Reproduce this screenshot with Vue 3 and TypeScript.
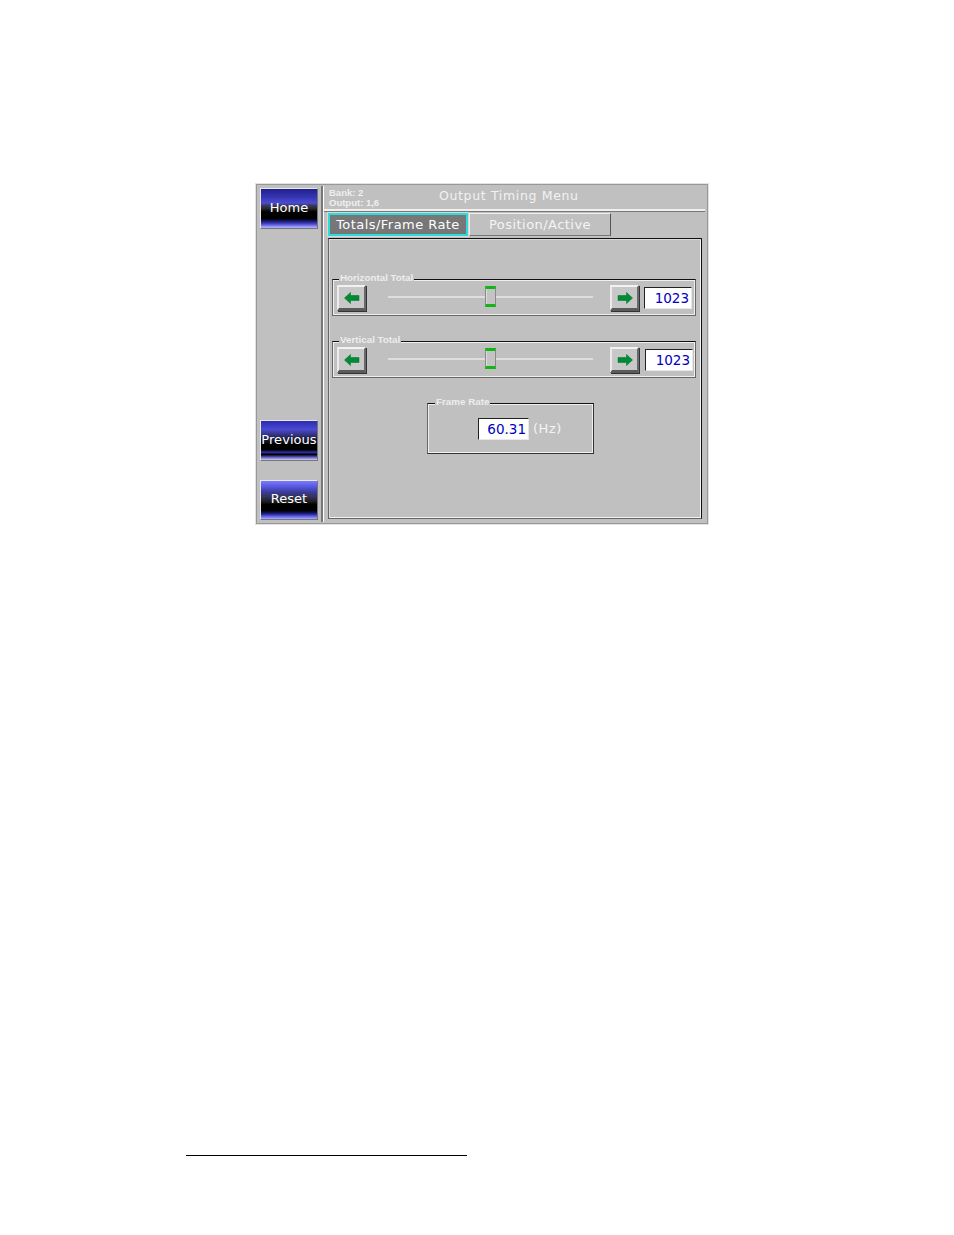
<script setup lang="ts">
interface Slider { label: string; value: string; wide: boolean }
const sliders: Slider[] = [
  { label: 'Horizontal Total', value: '1023', wide: false },
  { label: 'Vertical Total', value: '1023', wide: true },
]
</script>

<template>
  <div class="page">
    <div class="window">
      <aside class="side">
        <button class="nav home">Home</button>
        <div class="spacer"></div>
        <button class="nav previous">Previous</button>
        <button class="nav reset">Reset</button>
      </aside>
      <main class="main">
        <header class="head">
          <div class="status"><div>Bank: 2</div><div>Output: 1,6</div></div>
          <h1 class="title">Output Timing Menu</h1>
        </header>
        <nav class="tabs">
          <div class="tab active"><span>Totals/Frame Rate</span></div>
          <div class="tab"><span>Position/Active</span></div>
        </nav>
        <section class="panel">
          <div v-for="s in sliders" :key="s.label" class="group">
            <span class="legend">{{ s.label }}</span>
            <button class="arrow">
              <svg width="16" height="12" viewBox="0 0 16 12"><path d="M0.5 6 L6.5 0.5 V3.5 H15 V8.5 H6.5 V11.5 Z" fill="#008c34" stroke="#006a2c" stroke-width="0.5" /></svg>
            </button>
            <div class="slider"><div class="thumb"></div></div>
            <button class="arrow">
              <svg width="16" height="12" viewBox="0 0 16 12"><path d="M15.5 6 L9.5 0.5 V3.5 H1 V8.5 H9.5 V11.5 Z" fill="#008c34" stroke="#006a2c" stroke-width="0.5" /></svg>
            </button>
            <div class="value" :class="{ wide: s.wide }">{{ s.value }}</div>
          </div>
          <div class="frame">
            <span class="legend">Frame Rate</span>
            <div class="value rate">60.31</div>
            <span class="unit">(Hz)</span>
          </div>
        </section>
      </main>
    </div>
    <div class="footnote"></div>
  </div>
</template>

<style>
html, body { margin: 0; background: #fff; }
</style>

<style scoped>
.page {
  width: 954px;
  height: 1235px;
  box-sizing: border-box;
  padding-top: 183px;
  display: flex;
  flex-direction: column;
  overflow: hidden;
  font-family: "DejaVu Sans", sans-serif;
}
.window {
  margin-left: 255px;
  width: 454px;
  height: 342px;
  box-sizing: border-box;
  display: flex;
  background: #c0c0c0;
  border: 1px solid #e2e2e2;
  box-shadow: inset 0 0 0 1px #989898;
  padding: 2px;
}
.side {
  width: 64px;
  flex: none;
  box-sizing: border-box;
  padding: 2px 3px 2px 2px;
  display: flex;
  flex-direction: column;
  border-right: 1px solid #777;
}
.spacer { flex: 1; }
.nav {
  width: 58px;
  height: 41px;
  flex: none;
  box-sizing: border-box;
  padding: 0 0 3px;
  border: 1px solid;
  border-color: #e8e8e8 #777 #777 #e8e8e8;
  color: #fff;
  font: 13px "DejaVu Sans", sans-serif;
  letter-spacing: 0.05px;
  display: flex;
  align-items: center;
  justify-content: center;
  overflow: hidden;
  white-space: nowrap;
}
.home {
  background: linear-gradient(#20208e 0, #3434b0 20%, #4c4cd4 36%, #3a3a66 42%, #2a2a2a 50%, #000 58%, #000 76%, #16166a 82%, #4a4ad0 90%, #a8a8ff 98%);
}
.previous {
  margin-bottom: 19px;
  padding-bottom: 2px;
  background: linear-gradient(#2c2cb4 0, #4a4ad0 22%, #32327e 36%, #1c1c3a 46%, #000 60%, #000 74%, #3232a8 80%, #000 86%, #5050b8 92%, #c0c0f0 99%);
}
.reset {
  height: 40px;
  background: linear-gradient(#7a7aff 0, #5050d8 18%, #3a3a90 30%, #33335a 42%, #1e1e1e 54%, #000 62%, #000 78%, #1c1c80 86%, #5555e0 92%, #a0a0ff 99%);
}
.main {
  flex: 1;
  min-width: 0;
  border-left: 1px solid #fff;
  box-shadow: -1px 0 0 #777;
  margin-left: 1px;
  display: flex;
  flex-direction: column;
  padding-left: 4px;
}
.head {
  height: 23px;
  flex: none;
  display: flex;
  align-items: center;
  margin-left: -4px;
  padding-left: 5px;
  margin-right: 1px;
  border-bottom: 2px solid #f0f0f0;
  box-shadow: 0 1px 0 #777;
  box-sizing: content-box;
}
.status {
  width: 110px;
  flex: none;
  color: #efefef;
  font: bold 9.5px/10px "Liberation Sans", sans-serif;
}
.title {
  margin: 0 0 4px;
  color: #f2f2f2;
  font: 400 12.5px "DejaVu Sans", sans-serif;
  letter-spacing: 0.65px;
  white-space: nowrap;
}
.tabs {
  margin-top: 2px;
  height: 23px;
  flex: none;
  display: flex;
}
.tab {
  width: 142px;
  box-sizing: border-box;
  margin-left: 1px;
  border: 1px solid;
  border-color: #eee #555 #777 #eee;
  display: flex;
  align-items: center;
  justify-content: center;
  color: #f4f4f4;
  font-size: 13px;
  letter-spacing: 0.45px;
  white-space: nowrap;
}
.tab.active {
  width: 140px;
  margin-left: 0;
  background: #777;
  color: #fff;
  border: 2px solid #2fdada;
  outline: 1px solid #d8d8d8;
  outline-offset: 0;
}
.panel {
  margin-top: 2px;
  width: 374px;
  height: 281px;
  box-sizing: border-box;
  border: 1px solid;
  border-color: #111 #111 #666 #666;
  box-shadow: inset 1px 1px 0 #d8d8d8, inset -1px -1px 0 #f2f2f2;
  padding: 40px 5px 0 3px;
  display: flex;
  flex-direction: column;
  gap: 25px;
}
.group {
  position: relative;
  height: 37px;
  box-sizing: border-box;
  border: 1px solid #666;
  border-top-color: #111;
  box-shadow: inset 0 0 0 1px #efefef;
  display: flex;
  align-items: center;
  padding: 0 3px 0 4px;
}
.legend {
  position: absolute;
  top: -8px;
  left: 6px;
  padding: 0 1px;
  height: 11px;
  background: #c0c0c0;
  color: #ededed;
  font: bold 9.8px/11px "Liberation Sans", sans-serif;
  white-space: nowrap;
}
.arrow {
  width: 29px;
  height: 26px;
  flex: none;
  margin-top: 1px;
  box-sizing: border-box;
  padding: 0;
  background: #c8c8c8;
  border-style: solid;
  border-width: 2px 2px 3px 2px;
  border-color: #f2f2f2 #6a6a6a #5a5a5a #ececec;
  box-shadow: 1px 1px 0 #333;
  display: flex;
  align-items: center;
  justify-content: center;
}
.slider {
  flex: 1;
  height: 21px;
  margin: 0 17px 2px 22px;
  display: flex;
  justify-content: center;
  background: linear-gradient(#dedede, #dedede) center / 100% 2px no-repeat;
}
.thumb {
  width: 11px;
  height: 21px;
  margin-right: 1px;
  box-sizing: border-box;
  background: #c4c4c4;
  border: 1px solid #8a8a8a;
  border-top: 3px solid #12b812;
  border-bottom: 3px solid #12b812;
  box-shadow: inset 1px 0 0 #ddd;
}
.value {
  width: 48px;
  height: 22px;
  flex: none;
  margin-left: 5px;
  box-sizing: border-box;
  background: #fff;
  border: 1px solid;
  border-color: #222 #e8e8e8 #e8e8e8 #222;
  color: #0000c0;
  font-size: 13.5px;
  line-height: 20px;
  text-align: right;
  padding-right: 2px;
  margin-top: 1px;
}
.value.wide { margin-left: 6px; margin-right: -1px; }
.frame {
  position: relative;
  align-self: flex-start;
  margin-left: 95px;
  width: 167px;
  height: 51px;
  box-sizing: border-box;
  border: 1px solid #333;
  border-left-color: #666;
  border-top-color: #111;
  box-shadow: inset 0 0 0 1px #efefef;
  display: flex;
  align-items: center;
  padding-left: 50px;
}
.frame .legend { left: 7px; }
.value.rate {
  width: 51px;
  margin: 1px 0 0;
}
.unit {
  margin-left: 4px;
  color: #f4f4f4;
  font-size: 13px;
  letter-spacing: 0.5px;
}
.footnote {
  margin-left: 186px;
  margin-top: 630px;
  width: 281px;
  height: 1px;
  background: #000;
}
</style>
